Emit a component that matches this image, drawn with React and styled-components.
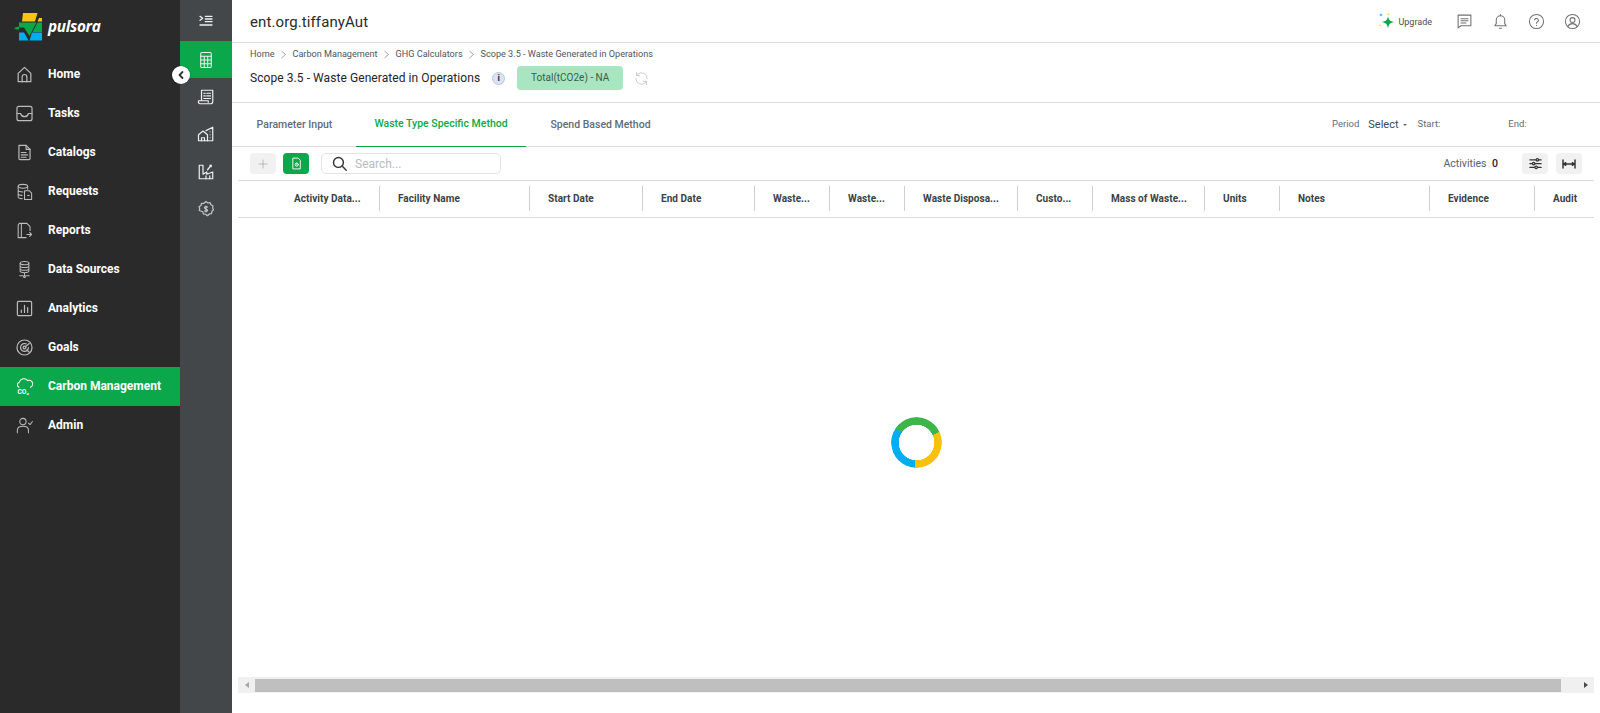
import React from 'react';
import styled, { createGlobalStyle } from 'styled-components';

const GlobalStyle = createGlobalStyle`
	html, body {
		margin: 0;
		padding: 0;
		background: #fff;
		font-family: Roboto, "Liberation Sans", sans-serif;
	}
	* { box-sizing: border-box; }
`;

const Page = styled.div`
	display: flex;
	width: 100%;
	height: 100vh;
	overflow: hidden;
	position: relative;
`;

const Sidebar = styled.aside`
	width: 180px;
	flex: none;
	background: #2a2a2a;
	display: flex;
	flex-direction: column;
`;

const LogoRow = styled.div`
	height: 54.5px;
	padding: 13px 0 0 14px;
	display: flex;
	align-items: flex-start;
	gap: 6px;
`;

const LogoText = styled.span`
	font-family: "Open Sans", sans-serif;
	font-style: italic;
	font-weight: 700;
	font-size: 15.3px;
	line-height: 27px;
	color: #fff;
	letter-spacing: -0.3px;
`;

const NavItem = styled.div`
	height: 39px;
	flex: none;
	display: flex;
	align-items: center;
	padding-left: 15px;
	gap: 15px;
	background: ${(p) => (p.$active ? '#0aa84a' : 'transparent')};
	color: #fff;
	font-size: 12px;
	font-weight: 700;
	svg {
		flex: none;
		width: 19px;
		height: 19px;
		margin: 0 -0.5px;
		color: ${(p) => (p.$active ? '#fff' : '#bdbdbd')};
	}
`;

const Rail = styled.nav`
	width: 52px;
	flex: none;
	background: #43474a;
	display: flex;
	flex-direction: column;
`;

const RailItem = styled.div`
	height: ${(p) => p.$h || 37.5}px;
	display: flex;
	align-items: center;
	justify-content: center;
	background: ${(p) => (p.$active ? '#0aa84a' : 'transparent')};
	color: ${(p) => p.$color || '#f0f0f0'};
`;

const CollapseButton = styled.div`
	position: absolute;
	left: 172px;
	top: 66px;
	width: 18px;
	height: 18px;
	border-radius: 50%;
	background: #fff;
	display: flex;
	align-items: center;
	justify-content: center;
	box-shadow: 0 0 2px rgba(0, 0, 0, 0.3);
`;

const Main = styled.main`
	flex: 1;
	min-width: 0;
	display: flex;
	flex-direction: column;
`;

const TopBar = styled.header`
	height: 43px;
	flex: none;
	border-bottom: 1px solid #dcdcdc;
	display: flex;
	align-items: center;
	justify-content: space-between;
	padding: 1px 19px 0 18px;
`;

const AppTitle = styled.div`
	font-size: 15px;
	color: #2a2a2a;
	letter-spacing: 0.1px;
`;

const TopActions = styled.div`
	display: flex;
	align-items: center;
	color: #6f7173;
`;

const Upgrade = styled.div`
	display: flex;
	align-items: center;
	gap: 3px;
	font-size: 9px;
	color: #4a4f52;
	margin-right: 23px;
`;

const TopIcon = styled.div`
	width: 18px;
	height: 18px;
	margin-left: ${(p) => p.$gap || 0}px;
	display: flex;
	align-items: center;
	justify-content: center;
`;

const PageHead = styled.section`
	height: 60px;
	flex: none;
	border-bottom: 1px solid #dcdcdc;
	padding: 4px 18px 0;
`;

const Crumbs = styled.div`
	display: flex;
	align-items: center;
	height: 14px;
	font-size: 9.1px;
	color: #4d5560;
`;

const CrumbSep = styled.span`
	display: flex;
	width: 18px;
	justify-content: center;
	color: #8a8f94;
`;

const HeadRow = styled.div`
	display: flex;
	align-items: center;
	height: 24px;
	margin-top: 5px;
`;

const PageTitle = styled.h1`
	margin: 0;
	font-size: 12px;
	font-weight: 400;
	color: #1f2226;
	letter-spacing: 0.07px;
`;

const InfoDot = styled.span`
	width: 13px;
	height: 13px;
	margin-left: 12px;
	border-radius: 50%;
	background: #dbe4f3;
	border: 1px solid #b8c6de;
	font-size: 9px;
	font-weight: 700;
	line-height: 11px;
	text-align: center;
	color: #1f2a44;
`;

const TotalBadge = styled.div`
	width: 106px;
	height: 24px;
	margin-left: 12px;
	background: #a8e6c1;
	border-radius: 4px;
	font-size: 10px;
	line-height: 23px;
	text-align: center;
	color: #3c5a4a;
`;

const RefreshIcon = styled.div`
	display: flex;
	margin-left: 10px;
	color: #c4c8cc;
`;

const TabBar = styled.div`
	height: 44px;
	flex: none;
	border-bottom: 1px solid #dcdcdc;
	display: flex;
	align-items: stretch;
	padding-left: 6px;
`;

const Tab = styled.div`
	width: ${(p) => p.$w}px;
	margin-right: ${(p) => p.$mr || 0}px;
	display: flex;
	align-items: center;
	justify-content: center;
	padding-bottom: 2px;
	font-size: 10.5px;
	font-weight: 500;
	color: ${(p) => (p.$active ? '#0aa84a' : '#5f6b7a')};
	border-bottom: ${(p) => (p.$active ? '1px solid #0aa84a' : '0')};
	margin-bottom: -1px;
`;

const PeriodGroup = styled.div`
	margin-left: auto;
	display: flex;
	align-items: center;
	width: 268px;
	padding-bottom: 2px;
	font-size: 9.5px;
	color: #5f6b7a;
`;

const SelectValue = styled.span`
	font-size: 11px;
	color: #3a4a5c;
	margin: 2px 0 0 9px;
`;

const Caret = styled.span`
	width: 0;
	height: 0;
	margin: 2px 11px 0 4px;
	border-left: 2.5px solid transparent;
	border-right: 2.5px solid transparent;
	border-top: 2.5px solid #5f6b7a;
`;

const EndLabel = styled.span`
	margin-left: 68px;
`;

const Toolbar = styled.div`
	height: 33px;
	flex: none;
	display: flex;
	align-items: center;
	padding: 0 18px;
`;

const IconButton = styled.div`
	width: 26px;
	height: 21px;
	border-radius: 4px;
	display: flex;
	align-items: center;
	justify-content: center;
	margin-right: ${(p) => p.$mr || 0}px;
	background: ${(p) => (p.$green ? '#0aa84a' : '#f1f1f1')};
	color: ${(p) => (p.$green ? '#fff' : p.$dark ? '#333' : '#a8a8a8')};
`;

const SearchBox = styled.div`
	width: 180px;
	height: 21px;
	margin-left: 12px;
	padding-left: 9px;
	border: 1px solid #e1e3e6;
	border-radius: 5px;
	display: flex;
	align-items: center;
	gap: 7px;
	font-size: 12px;
	color: #b8bcc1;
	svg { color: #333; flex: none; }
`;

const ActivityCount = styled.div`
	margin-left: auto;
	margin-right: 24px;
	font-size: 10.5px;
	color: #55616e;
	b { margin-left: 3px; color: #1f2226; font-weight: 500; }
`;

const Table = styled.div`
	flex: 1;
	min-height: 0;
	margin: 0 6px;
	display: flex;
	flex-direction: column;
`;

const HeadGrid = styled.div`
	height: 38px;
	flex: none;
	display: flex;
	align-items: center;
	padding-bottom: 1px;
	border-top: 1px solid #dcdcdc;
	border-bottom: 1px solid #dcdcdc;
`;

const HeadCell = styled.div`
	width: ${(p) => p.$w}px;
	height: 25px;
	flex: none;
	display: flex;
	align-items: center;
	padding-left: ${(p) => p.$pad || 18}px;
	border-right: ${(p) => (p.$last ? '0' : '1px solid #cfcfcf')};
	font-size: 10px;
	font-weight: 700;
	letter-spacing: 0.05px;
	color: #3a3f45;
	white-space: nowrap;
`;

const TableBody = styled.div`
	flex: 1;
	min-height: 0;
	display: flex;
	align-items: center;
	justify-content: center;
	padding-bottom: 11px;
`;

const Spinner = styled.div`
	width: 51px;
	height: 51px;
	border-radius: 50%;
	background: conic-gradient(#3eb54a 0deg 65deg, #f6c20e 65deg 184deg, #00aeef 184deg 304deg, #3eb54a 304deg);
	-webkit-mask: radial-gradient(circle, transparent 17.5px, #000 18px);
	mask: radial-gradient(circle, transparent 17.5px, #000 18px);
`;

const ScrollBar = styled.div`
	height: 16px;
	flex: none;
	margin-bottom: 20px;
	background: #f0f0f0;
	display: flex;
	align-items: center;
`;

const ScrollArrow = styled.span`
	width: 17px;
	flex: none;
	display: flex;
	justify-content: center;
	&::before {
		content: '';
		border-top: 3.5px solid transparent;
		border-bottom: 3.5px solid transparent;
		${(p) => (p.$right ? 'border-left: 4px solid #4a4a4a;' : 'border-right: 4px solid #a3a3a3;')}
	}
`;

const ScrollThumb = styled.div`
	flex: 1;
	height: 13px;
	background: #bfbfbf;
	margin-right: 16px;
`;

// line icons that the icon packages don't have in this shape
const Icon = ({ size = 18, box = 24, sw = 1.5, children }) => (
	<svg width={size} height={size} viewBox={`0 0 ${box} ${box}`} fill="none" stroke="currentColor" strokeWidth={sw} strokeLinecap="round" strokeLinejoin="round">
		{children}
	</svg>
);

const LogoMark = () => (
	<svg width="28" height="28" viewBox="0 0 28 28">
		<path d="M9 0H23.5L21 8.5H8Z" fill="#fcc30f" />
		<path d="M25 5H28V8.5H23.5Z" fill="#fcc30f" />
		<path d="M5 9.5H22.5L17.500 19L15.500 23L10 14.500H5Z" fill="#0aa84a" />
		<path d="M23.500 9.500H28V19H18.500Z" fill="#0aa84a" />
		<path d="M0 15L5 13.500V16.500H2Z" fill="#0aa84a" />
		<path d="M5 19.500H10L14.500 27.500H5Z" fill="#00aeef" />
		<path d="M18 19.500H28V27.500H15.500Z" fill="#00aeef" />
	</svg>
);

const HomeIcon = () => (
	<Icon><path d="M4 21V10.500L12 3l8 7.500V21Z" /><path d="M9 21v-6a3 3 0 0 1 6 0v6" /></Icon>
);
const TasksIcon = () => (
	<Icon><rect x="2.5" y="3" width="19" height="18" rx="2.5" /><path d="M2.5 12H7c.8 3 2.500 4 5 4s4.200-1 5-4h4.500" /></Icon>
);
const CatalogIcon = () => (
	<Icon><path d="M5 3h9l5 5v11.500a1.500 1.500 0 0 1-1.500 1.500h-11A1.500 1.500 0 0 1 5 19.500Z" /><path d="M14 3v5h5M8 12h6M8 15h8M8 18h6" /></Icon>
);
const RequestsIcon = () => (
	<Icon sw={1.3}><ellipse cx="10" cy="5.500" rx="6" ry="2.500" /><path d="M4 5.500v13c0 1.400 2.500 2.500 5 2.500M4 10c0 1.400 2.500 2.500 6 2.500M4 14.500c0 1.200 2 2.200 5 2.400M16 5.500V9" /><path d="M12 11h6l3 3v8h-9Z" /><path d="M16 17h2" /></Icon>
);
const ReportsIcon = () => (
	<Icon sw={1.3}><path d="M8 3H5.500L4 5v16h3M8 3h7l4 4v5M8 3v18h6" /><path d="M15 17h6M18.500 14.500 21 17l-2.500 2.500" /></Icon>
);
const DataIcon = () => (
	<Icon sw={1.3}><ellipse cx="12" cy="4" rx="5.500" ry="2" /><path d="M6.500 4v10c0 1.100 2.500 2 5.500 2s5.500-.9 5.500-2V4M6.500 7.500c0 1.100 2.500 2 5.500 2s5.500-.9 5.500-2M6.500 11c0 1.100 2.500 2 5.500 2s5.500-.9 5.500-2M12 16v4M6 20h4M14 20h4" /><circle cx="12" cy="21" r="1.200" /></Icon>
);
const AnalyticsIcon = () => (
	<Icon><rect x="3" y="3" width="18" height="18" rx="1.500" /><path d="M8 17v-3M12 17V8M16 17v-6" /></Icon>
);
const GoalsIcon = () => (
	<Icon><circle cx="12" cy="12" r="9.500" /><path d="M17 12a5 5 0 1 1-3-4.600" /><circle cx="12" cy="12" r="1.800" /><path d="M13 11l5-4" /><path d="M15 15l3 3" /></Icon>
);
const CarbonIcon = () => (
	<svg width="18" height="18" viewBox="0 0 24 24" fill="none" stroke="currentColor" strokeWidth="1.3" strokeLinecap="round">
		<path d="M5 13a3.500 3.500 0 0 1 .5-6.500 6 6 0 0 1 10.500-2 4.500 4.500 0 0 1 3.500 8.500" />
		<text x="3" y="22" fontFamily="Roboto, sans-serif" fontSize="8.5" fontWeight="700" fill="currentColor" stroke="none">CO₂</text>
	</svg>
);
const AdminIcon = () => (
	<Icon sw={1.3}><circle cx="10" cy="7" r="4" /><path d="M3 21v-3c0-3 2.500-5 7-5s7 2 7 5v3M17 9l2 2 3-4" /></Icon>
);

const RailToggleIcon = () => (
	<Icon size={16} sw={2}><path d="M3 5l4 3-4 3M11 5h10M11 9h10M11 13h10M3 18h18" /></Icon>
);
const CalcIcon = () => (
	<Icon sw={1.4}><rect x="5" y="2" width="14" height="20" rx="1.500" /><path d="M5 7h14M5 12h14M5 17h14M9.700 7v15M14.300 7v15" /></Icon>
);
const LedgerIcon = () => (
	<Icon sw={1.6}><path d="M6 17V3h15v15a3 3 0 0 1-3 3H4a2 2 0 0 1-2-2.500V17h13v2" /><path d="M9 7h2M13 7h5M9 10.500h2M13 10.500h5M9 14h9" /></Icon>
);
const BuildingIcon = () => (
	<Icon sw={1.6}><path d="M2 21V13l6-5 6 5v8Z" /><path d="M6 21v-4h4v4" /><path d="M12 7.500 21 3v18h-7M17.500 9h0M17.500 13h0M17.500 17h0" /></Icon>
);
const FactoryIcon = () => (
	<Icon sw={1.6}><path d="M3 21V3h5v12l5-3v3l8-3v9Z" /><path d="M14 9l5-6M17 3h2v2M12 21v-4M17 21v-4" /></Icon>
);
const GearDollarIcon = () => (
	<Icon sw={1.6}><path d="M12 2l2.500 2 3-.5 1 2.800 2.800 1.300-.5 3 1.200 2.400-2.200 2.200-.3 3-3 .4-2.500 2.400-2.500-2-3-.4-.8-2.900L3 14l.6-2.500L2.700 9l2.600-1.600.6-3 3 .3Z" /><path d="M12 8v8M14 9.500c-.7-.9-4-1-4 .8s4 1.500 4 3.400-3.300 1.700-4 .8" /></Icon>
);

const SparkIcon = () => (
	<svg width="17" height="17" viewBox="0 0 17 17">
		<path d="M10 3c.6 4 2 5.400 6.500 6-4.500.7-5.900 2-6.500 6.500C9.400 11 8 9.700 3.500 9 8 8.400 9.400 7 10 3Z" fill="#0aa84a" />
		<path d="M3 0c.2 1.400.6 1.800 2 2-1.400.2-1.800.6-2 2-.2-1.400-.6-1.800-2-2 1.400-.2 1.800-.6 2-2Z" fill="#00aeef" />
		<path d="M10.500 0c.2.800.4 1 1.200 1.200-.8.200-1 .4-1.200 1.200-.2-.8-.4-1-1.200-1.200.8-.2 1-.4 1.200-1.200Z" fill="#fcc30f" />
		<path d="M2 11c.2.800.4 1 1.200 1.200-.8.200-1 .4-1.200 1.200-.2-.8-.4-1-1.200-1.200.8-.2 1-.4 1.200-1.200Z" fill="#fcc30f" />
	</svg>
);

const Chevron = () => (
	<svg width="7" height="9" viewBox="0 0 7 9" fill="none" stroke="currentColor" strokeWidth="0.8"><path d="M1.500 1 5.500 4.500 1.500 8" /></svg>
);

const navItems = [
	{ label: 'Home', icon: <HomeIcon /> },
	{ label: 'Tasks', icon: <TasksIcon /> },
	{ label: 'Catalogs', icon: <CatalogIcon /> },
	{ label: 'Requests', icon: <RequestsIcon /> },
	{ label: 'Reports', icon: <ReportsIcon /> },
	{ label: 'Data Sources', icon: <DataIcon /> },
	{ label: 'Analytics', icon: <AnalyticsIcon /> },
	{ label: 'Goals', icon: <GoalsIcon /> },
	{ label: 'Carbon Management', icon: <CarbonIcon />, active: true },
	{ label: 'Admin', icon: <AdminIcon /> },
];

const columns = [
	{ label: 'Activity Data...', w: 142, pad: 56 },
	{ label: 'Facility Name', w: 150 },
	{ label: 'Start Date', w: 113 },
	{ label: 'End Date', w: 112 },
	{ label: 'Waste...', w: 75 },
	{ label: 'Waste...', w: 75 },
	{ label: 'Waste Disposa...', w: 113 },
	{ label: 'Custo...', w: 75 },
	{ label: 'Mass of Waste...', w: 112 },
	{ label: 'Units', w: 75 },
	{ label: 'Notes', w: 150 },
	{ label: 'Evidence', w: 105 },
	{ label: 'Audit', w: 60, last: true },
];

const App = () => {
	return (
		<Page>
			<GlobalStyle />
			<Sidebar>
				<LogoRow>
					<LogoMark />
					<LogoText>pulsora</LogoText>
				</LogoRow>
				{navItems.map((item) => (
					<NavItem key={item.label} $active={item.active}>
						{item.icon}
						{item.label}
					</NavItem>
				))}
			</Sidebar>
			<Rail>
				<RailItem $h={41}><RailToggleIcon /></RailItem>
				<RailItem $h={37} $active><CalcIcon /></RailItem>
				<RailItem><LedgerIcon /></RailItem>
				<RailItem><BuildingIcon /></RailItem>
				<RailItem><FactoryIcon /></RailItem>
				<RailItem $color="#c4c6c8"><GearDollarIcon /></RailItem>
			</Rail>
			<CollapseButton>
				<svg width="10" height="10" viewBox="0 0 10 10" fill="none" stroke="#333" strokeWidth="1.8" strokeLinecap="round" strokeLinejoin="round"><path d="M6.500 2 3.500 5l3 3" /></svg>
			</CollapseButton>
			<Main>
				<TopBar>
					<AppTitle>ent.org.tiffanyAut</AppTitle>
					<TopActions>
						<Upgrade><SparkIcon />Upgrade</Upgrade>
						<TopIcon>
							<Icon size={17}><path d="M3 3h18v15H7l-4 3Z" /><path d="M7 8h10M7 11h10M7 14h7" /></Icon>
						</TopIcon>
						<TopIcon $gap={18}>
							<Icon size={17}><path d="M4 18h16l-2-3V10a6 6 0 0 0-12 0v5Z" /><path d="M12 2v2M10.500 21.500h3" /></Icon>
						</TopIcon>
						<TopIcon $gap={18}>
							<Icon size={17}><circle cx="12" cy="12" r="10" /><path d="M9.200 9.500a2.900 2.900 0 0 1 5.600.8c0 1.800-2.800 2.300-2.800 4M12 17.500h0" /></Icon>
						</TopIcon>
						<TopIcon $gap={18}>
							<Icon size={17}><circle cx="12" cy="12" r="10" /><circle cx="12" cy="10" r="3.500" /><path d="M5.500 19c1.300-2.700 3.500-4 6.500-4s5.200 1.300 6.500 4" /></Icon>
						</TopIcon>
					</TopActions>
				</TopBar>
				<PageHead>
					<Crumbs>
						Home<CrumbSep><Chevron /></CrumbSep>
						Carbon Management<CrumbSep><Chevron /></CrumbSep>
						GHG Calculators<CrumbSep><Chevron /></CrumbSep>
						Scope 3.5 - Waste Generated in Operations
					</Crumbs>
					<HeadRow>
						<PageTitle>Scope 3.5 - Waste Generated in Operations</PageTitle>
						<InfoDot>i</InfoDot>
						<TotalBadge>Total(tCO2e) - NA</TotalBadge>
						<RefreshIcon>
							<Icon size={17} sw={1.3}><path d="M20 12a8 8 0 0 0-13.500-5.800L5 8M5 3.500V8h4.500M4 12a8 8 0 0 0 13.500 5.800L19 16M19 20.500V16h-4.500" /></Icon>
						</RefreshIcon>
					</HeadRow>
				</PageHead>
				<TabBar>
					<Tab $w={113} $mr={5}>Parameter Input</Tab>
					<Tab $w={170} $active>Waste Type Specific Method</Tab>
					<Tab $w={149}>Spend Based Method</Tab>
					<PeriodGroup>
						Period
						<SelectValue>Select</SelectValue>
						<Caret />
						Start:
						<EndLabel>End:</EndLabel>
					</PeriodGroup>
				</TabBar>
				<Toolbar>
					<IconButton $mr={7}>
						<Icon size={12}><path d="M12 4v16M4 12h16" /></Icon>
					</IconButton>
					<IconButton $green>
						<Icon size={13} sw={1.7}><path d="M6 2h9l4 4v16H6Z" /><circle cx="12.500" cy="14" r="3" /><path d="M12.500 12.500V14l1 1" /></Icon>
					</IconButton>
					<SearchBox>
						<Icon size={17} sw={2}><circle cx="10.500" cy="10.500" r="7" /><path d="m16 16 5.500 5.500" /></Icon>
						Search...
					</SearchBox>
					<ActivityCount>Activities <b>0</b></ActivityCount>
					<IconButton $dark $mr={8}>
						<Icon size={15} sw={2}><path d="M3 6h18M3 12h18M3 18h18" /><circle cx="15" cy="6" r="2" fill="#f1f1f1" /><circle cx="9" cy="12" r="2" fill="#f1f1f1" /><circle cx="13" cy="18" r="2" fill="#f1f1f1" /></Icon>
					</IconButton>
					<IconButton $dark>
						<Icon size={16} sw={2.2}><path d="M3 6v12M21 6v12M3 12h18M7 10l-3 2 3 2M17 10l3 2-3 2" /></Icon>
					</IconButton>
				</Toolbar>
				<Table>
					<HeadGrid>
						{columns.map((col, i) => (
							<HeadCell key={i} $w={col.w} $pad={col.pad} $last={col.last}>{col.label}</HeadCell>
						))}
					</HeadGrid>
					<TableBody>
						<Spinner />
					</TableBody>
					<ScrollBar>
						<ScrollArrow />
						<ScrollThumb />
						<ScrollArrow $right />
					</ScrollBar>
				</Table>
			</Main>
		</Page>
	);
};

export default App;
